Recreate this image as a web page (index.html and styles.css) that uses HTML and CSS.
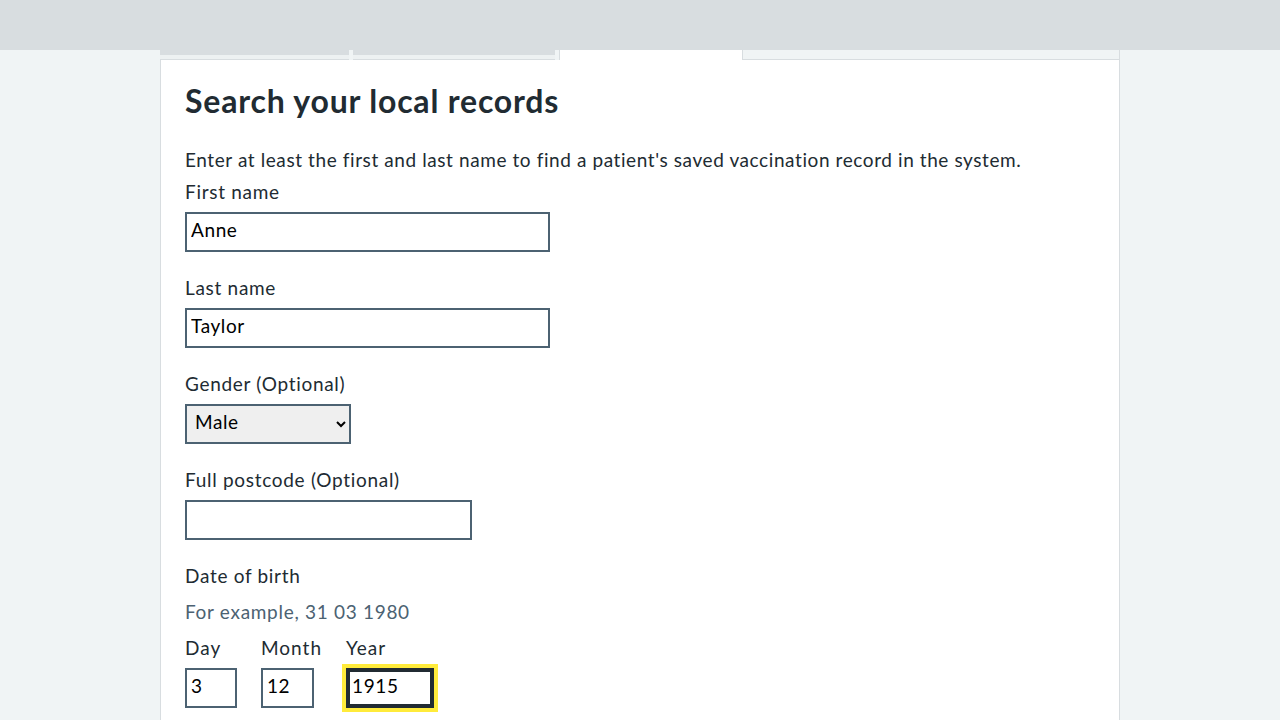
FILE: index.html
```html
<!DOCTYPE html>
<html lang="en">
<head>
<meta charset="utf-8">
<title>Search your local records</title>
<link rel="stylesheet" href="styles.css">
</head>
<body>
<header class="top-band"></header>
<main class="container">
  <ul class="tabs">
    <li class="tab"></li>
    <li class="tab tab-wide"></li>
    <li class="tab tab-selected"></li>
    <li class="tab-rest"></li>
  </ul>
  <section class="panel">
    <h2 class="heading">Search your local records</h2>
    <p class="intro">Enter at least the first and last name to find a patient's saved vaccination record in the system.</p>
    <div class="form-group">
      <label class="label" for="first">First name</label>
      <input class="input input-name" id="first" type="text" value="Anne">
    </div>
    <div class="form-group">
      <label class="label" for="last">Last name</label>
      <input class="input input-name" id="last" type="text" value="Taylor">
    </div>
    <div class="form-group">
      <label class="label" for="gender">Gender (Optional)</label>
      <select class="select" id="gender">
        <option>Male</option>
        <option>Female</option>
        <option>Other</option>
      </select>
    </div>
    <div class="form-group">
      <label class="label" for="postcode">Full postcode (Optional)</label>
      <input class="input input-postcode" id="postcode" type="text" value="">
    </div>
    <fieldset class="fieldset">
      <legend class="legend">Date of birth</legend>
      <div class="hint">For example, 31 03 1980</div>
      <div class="date">
        <div class="date-item">
          <label class="label date-label" for="day">Day</label>
          <input class="input input-day" id="day" type="text" value="3">
        </div>
        <div class="date-item">
          <label class="label date-label" for="month">Month</label>
          <input class="input input-month" id="month" type="text" value="12">
        </div>
        <div class="date-item">
          <label class="label date-label" for="year">Year</label>
          <input class="input input-year is-focused" id="year" type="text" value="1915">
        </div>
      </div>
    </fieldset>
  </section>
</main>
</body>
</html>
```

FILE: styles.css
```css
html, body {
  margin: 0;
  padding: 0;
}
body {
  background: #f0f4f5;
  font-family: "Lato", "Noto Sans", sans-serif;
  letter-spacing: 0.6px;
  color: #212b32;
  overflow: hidden;
}
.top-band {
  height: 50px;
  background: #d8dde0;
}
.container {
  width: 960px;
  margin: 0 auto;
}
.tabs {
  list-style: none;
  margin: 0;
  padding: 0;
  display: flex;
  height: 10px;
}
.tab {
  box-sizing: border-box;
  width: 189px;
  height: 10px;
  margin-right: 4px;
  background: linear-gradient(#d8dde0 0 5px, #edf1f2 5px 9px);
  border-bottom: 1px solid #d8dde0;
}
.tab-wide {
  width: 202px;
}
.tab-selected {
  width: 184px;
  margin-right: 0;
  background: #fff;
  border-left: 1px solid #d8dde0;
  border-right: 1px solid #d8dde0;
  border-bottom: 0;
}
.tab-rest {
  flex: 1;
  box-sizing: border-box;
  border-bottom: 1px solid #d8dde0;
  border-right: 1px solid #d8dde0;
}
.panel {
  background: #fff;
  border: 1px solid #d8dde0;
  border-top: 0;
  padding: 21px 24px 40px;
  min-height: 700px;
}
.heading {
  margin: 0 0 25px;
  font-size: 32px;
  line-height: 40px;
  font-weight: 700;
  letter-spacing: 0.8px;
}
.intro {
  margin: 0 0 4px;
  font-size: 19px;
  line-height: 28px;
  letter-spacing: 0.59px;
}
.form-group {
  margin-bottom: 22px;
}
.label {
  display: block;
  font-size: 19px;
  line-height: 28px;
  letter-spacing: 0.7px;
  margin-bottom: 6px;
}
.date-label {
  letter-spacing: 1px;
}
.input {
  box-sizing: border-box;
  display: block;
  height: 40px;
  border: 2px solid #4c6272;
  border-radius: 0;
  padding: 1px 4px 7px;
  font-family: inherit;
  font-size: 19px;
  letter-spacing: 0.6px;
  color: #000;
  background: #fff;
  margin: 0;
}
.input-name {
  width: 365px;
}
.input-postcode {
  width: 287px;
}
.select {
  box-sizing: border-box;
  display: block;
  width: 166px;
  height: 40px;
  border: 2px solid #4c6272;
  border-radius: 0;
  padding: 0 4px 6px;
  font-family: inherit;
  font-size: 19px;
  letter-spacing: 0.6px;
  color: #000;
  background-color: #efefef;
  margin: 0;
}
.fieldset {
  border: 0;
  margin: 0;
  padding: 0;
}
.legend {
  padding: 0;
  font-size: 19px;
  line-height: 28px;
  letter-spacing: 0.7px;
  margin-bottom: 8px;
}
.hint {
  color: #4c6272;
  font-size: 19px;
  line-height: 28px;
  letter-spacing: 0.7px;
  margin-bottom: 8px;
}
.date {
  display: flex;
}
.date-item {
  margin-right: 24px;
}
.input-day {
  width: 52px;
}
.input-month {
  width: 53px;
}
.input-year {
  width: 88px;
}
.is-focused {
  border: 4px solid #212b32;
  box-shadow: 0 0 0 4px #ffeb3b;
  outline: none;
  padding: 0 2px 5px;
}
```
